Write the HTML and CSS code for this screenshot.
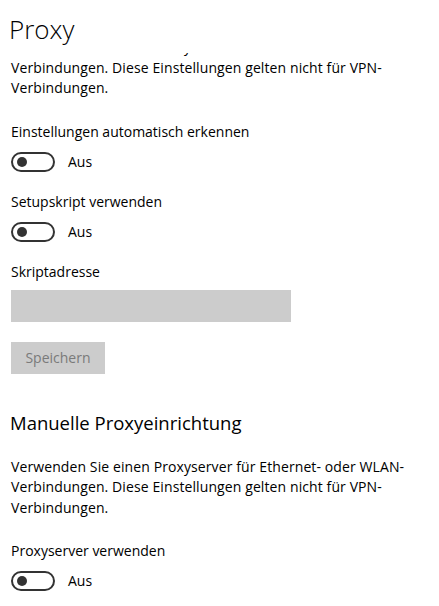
FILE: index.html
```html
<!DOCTYPE html>
<html lang="de">
<head>
<meta charset="utf-8">
<title>Proxy</title>
<link rel="stylesheet" href="styles.css">
</head>
<body>
<div class="page">
  <header class="header">
    <h1 class="title">Proxy</h1>
  </header>
  <div class="viewport">
    <div class="content">
      <p class="para">Verwenden Sie einen Proxyserver für Ethernet- oder WLAN-Verbindungen. Diese Einstellungen gelten nicht für VPN-Verbindungen.</p>

      <div class="setting first">
        <div class="label">Einstellungen automatisch erkennen</div>
        <div class="toggle-row"><span class="toggle"><span class="knob"></span></span><span class="state">Aus</span></div>
      </div>

      <div class="setting">
        <div class="label">Setupskript verwenden</div>
        <div class="toggle-row"><span class="toggle"><span class="knob"></span></span><span class="state">Aus</span></div>
      </div>

      <div class="setting">
        <div class="label">Skriptadresse</div>
        <div class="textbox"></div>
      </div>

      <button class="btn" type="button">Speichern</button>

      <h2 class="subtitle">Manuelle Proxyeinrichtung</h2>
      <p class="para para2">Verwenden Sie einen Proxyserver für Ethernet- oder WLAN-Verbindungen. Diese Einstellungen gelten nicht für VPN-Verbindungen.</p>

      <div class="setting first">
        <div class="label">Proxyserver verwenden</div>
        <div class="toggle-row"><span class="toggle"><span class="knob"></span></span><span class="state">Aus</span></div>
      </div>
    </div>
  </div>
</div>
</body>
</html>
```
FILE: styles.css
```css
html, body {
  margin: 0;
  padding: 0;
  background: #ffffff;
}
body {
  font-family: "Open Sans", "Noto Sans", "Liberation Sans", sans-serif;
  color: #000000;
  font-size: 14px;
  width: 439px;
  height: 606px;
  overflow: hidden;
}
.page {
  display: flex;
  flex-direction: column;
  height: 606px;
}
.header {
  height: 53px;
  flex: 0 0 auto;
  padding-left: 9px;
  box-sizing: border-box;
  overflow: hidden;
}
.title {
  margin: 0;
  padding-top: 12px;
  font-size: 26px;
  font-weight: 300;
  line-height: 34px;
  color: #000;
}
.viewport {
  flex: 1 1 auto;
  overflow: hidden;
  padding-left: 11px;
}
.content {
  margin-top: -16px;
  display: flex;
  flex-direction: column;
  align-items: flex-start;
}
.para {
  margin: 0;
  width: 400px;
  line-height: 20.5px;
  letter-spacing: 0.1px;
}
.setting {
  display: flex;
  flex-direction: column;
  align-items: flex-start;
  margin-top: 20px;
}
.setting.first {
  margin-top: 23px;
}
.label {
  line-height: 20px;
}
.toggle-row {
  display: flex;
  align-items: center;
  gap: 13px;
  margin-top: 10px;
  height: 20px;
}
.toggle {
  box-sizing: border-box;
  width: 44px;
  height: 20px;
  border: 2px solid #333333;
  border-radius: 10px;
  display: flex;
  align-items: center;
  padding-left: 4px;
}
.knob {
  width: 10px;
  height: 10px;
  border-radius: 50%;
  background: #333333;
}
.state {
  line-height: 20px;
}
.textbox {
  margin-top: 8px;
  width: 280px;
  height: 32px;
  background: #cccccc;
}
.btn {
  margin-top: 20px;
  width: 94px;
  height: 32px;
  background: #cccccc;
  border: none;
  padding: 0;
  font-family: inherit;
  font-size: 14px;
  color: #7a7a7a;
}
.subtitle {
  margin: 35px 0 0 -1px;
  font-size: 18.5px;
  font-weight: 400;
  line-height: 28px;
  color: #000;
}
.para2 {
  margin-top: 20px;
}
```
